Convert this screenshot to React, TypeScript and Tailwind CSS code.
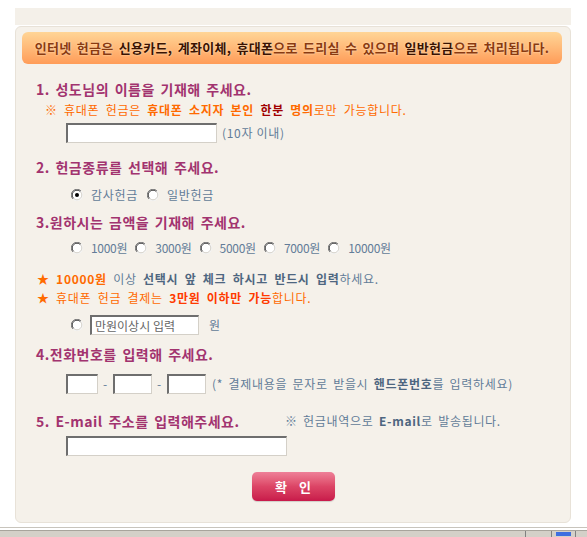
import React from "react"

function Radio({ checked = false }: { checked?: boolean }) {
  return (
    <svg width="12" height="12" viewBox="0 0 12 12" className="shrink-0">
      <circle cx="6" cy="6" r="5.5" fill="#ffffff" />
      <path d="M1.9 10.1 A5.5 5.5 0 0 1 10.1 1.9" fill="none" stroke="#808080" strokeWidth="1" />
      <path d="M2.6 9.4 A4.5 4.5 0 0 1 9.4 2.6" fill="none" stroke="#404040" strokeWidth="1" />
      <path d="M10.1 1.9 A5.5 5.5 0 0 1 1.9 10.1" fill="none" stroke="#f4f4f4" strokeWidth="1" />
      <path d="M9.4 2.6 A4.5 4.5 0 0 1 2.6 9.4" fill="none" stroke="#d4d0c8" strokeWidth="1" />
      {checked && <circle cx="6" cy="6" r="2" fill="#000000" />}
    </svg>
  )
}

const inputCls =
  "h-[20px] bg-white border-t-2 border-l-2 border-r border-b border-t-[#6e6e6e] border-l-[#6e6e6e] border-r-[#d4d0c8] border-b-[#d4d0c8] outline-none px-[3px] text-[12px] text-[#555] tracking-normal"

function Title({ children }: { children: React.ReactNode }) {
  return (
    <div className="h-[20px] flex items-center pl-[20px] text-[14px] font-bold text-[#a2336f] tracking-[0.5px] [word-spacing:2px] whitespace-nowrap">
      {children}
    </div>
  )
}

export default function App() {
  return (
    <div className="w-[587px] h-[537px] bg-white overflow-hidden flex flex-col font-['Noto_Sans_CJK_KR','Noto_Sans',sans-serif] text-[12px] text-[#627c98] tracking-[0.7px] whitespace-nowrap">
      <div className="ml-[15px] w-[556px] mt-[8px] h-[17px] bg-[#f4f0e9]" />
      {/* main panel */}
      <div className="ml-[15px] w-[556px] mt-[1px] h-[497px] rounded-[6px] border border-[#e8e2d8] bg-[#f5f1ea] flex flex-col">
        {/* banner */}
        <div className="ml-[6px] mt-[5px] w-[540px] h-[32px] rounded-[6px] bg-linear-to-b from-[#ffd596] to-[#ff9c58] flex items-center justify-center text-[13px] font-bold text-[#8a3a10] tracking-[0.3px] [text-shadow:0_0_2px_#ffeccc] [word-spacing:2px]">
          <span>
            인터넷 헌금은 <span className="text-[#3a1200]">신용카드, 계좌이체, 휴대폰</span>으로 드리실 수 있으며{" "}
            <span className="text-[#3a1200]">일반헌금</span>으로 처리됩니다.
          </span>
        </div>

        {/* 1 */}
        <div className="mt-[15px]">
          <Title>1. 성도님의 이름을 기재해 주세요.</Title>
        </div>
        <div className="mt-[2px] h-[18px] flex items-center pl-[29px] text-[#ff6a00] [word-spacing:3px]">
          <span>
            ※ 휴대폰 헌금은 <b>휴대폰 소지자 본인</b> <b className="text-[#a00000]">한분</b> <b>명의</b>로만 가능합니다.
          </span>
        </div>
        <div className="mt-[4px] pl-[50px] flex items-center gap-[5px]">
          <input type="text" className={`${inputCls} w-[151px]`} />
          <span>(10자 이내)</span>
        </div>

        {/* 2 */}
        <div className="mt-[14px]">
          <Title>2. 헌금종류를 선택해 주세요.</Title>
        </div>
        <div className="mt-[9px] h-[18px] pl-[55px] flex items-center">
          <div className="w-[76px] flex items-center gap-[8px]">
            <Radio checked />
            <span>감사헌금</span>
          </div>
          <div className="flex items-center gap-[8px]">
            <Radio />
            <span>일반헌금</span>
          </div>
        </div>

        {/* 3 */}
        <div className="mt-[8px]">
          <Title>3.원하시는 금액을 기재해 주세요.</Title>
        </div>
        <div className="mt-[7px] h-[18px] pl-[55px] flex items-center tracking-[-0.3px]">
          {["1000원", "3000원", "5000원", "7000원", "10000원"].map((v) => (
            <div key={v} className="w-[64.3px] flex items-center gap-[8px] shrink-0">
              <Radio />
              <span>{v}</span>
            </div>
          ))}
        </div>
        <div className="mt-[12px] h-[19px] pl-[21px] flex items-center [word-spacing:3px]">
          <span>
            <b className="text-[#ff6a00]">★ 10000원</b> 이상 <b className="text-[#4e6680]">선택시 앞 체크 하시고 반드시 입력</b>하세요.
          </span>
        </div>
        <div className="h-[19px] pl-[21px] flex items-center text-[#ff6a00] [word-spacing:3px]">
          <span>
            ★ 휴대폰 헌금 결제는 <b className="text-[#ff3a00]">3만원 이하만 가능</b>합니다.
          </span>
        </div>
        <div className="mt-[8px] pl-[55px] flex items-center">
          <Radio />
          <input type="text" readOnly defaultValue="만원이상시 입력" className={`${inputCls} w-[109px] ml-[7px] text-[#666]`} />
          <span className="ml-[10px]">원</span>
        </div>

        {/* 4 */}
        <div className="mt-[9px]">
          <Title>4.전화번호를 입력해 주세요.</Title>
        </div>
        <div className="mt-[10px] pl-[50px] flex items-center">
          <input type="text" className={`${inputCls} w-[32px]`} />
          <span className="w-[15px] text-center">-</span>
          <input type="text" className={`${inputCls} w-[39px]`} />
          <span className="w-[15px] text-center">-</span>
          <input type="text" className={`${inputCls} w-[39px]`} />
          <span className="ml-[6px] [word-spacing:2px]">
            (* 결제내용을 문자로 받을시 <b className="text-[#4e6680]">핸드폰번호</b>를 입력하세요)
          </span>
        </div>

        {/* 5 */}
        <div className="mt-[17px] flex items-center">
          <div className="w-[269px]">
            <Title>5. E-mail 주소를 입력해주세요.</Title>
          </div>
          <span className="[word-spacing:2px]">
            ※ 헌금내역으로 <b className="text-[#4e6680]">E-mail</b>로 발송됩니다.
          </span>
        </div>
        <div className="mt-[5px] pl-[50px]">
          <input type="text" className={`${inputCls} w-[221px]`} />
        </div>

        <div className="mt-[16px] flex justify-center">
          <button className="w-[83px] h-[29px] rounded-[5px] bg-linear-to-b from-[#ee8098] via-[#dc4466] to-[#c8184a] text-white text-[13px] font-bold tracking-normal [word-spacing:9px] shadow-[0_1px_1px_rgba(0,0,0,0.15)]">
            확 인
          </button>
        </div>
      </div>

      {/* browser status bar */}
      <div className="mt-[4px] h-[1px] bg-[#c8c4bc]" />
      <div className="h-[2px] bg-white" />
      <div className="flex-1 bg-[#d4d0c8] border-t border-[#a8a49c] flex">
        <div className="flex-1" />
        <div className="w-[26px] border-l border-[#808080]" />
        <div className="w-[24px] border-l border-[#808080] flex justify-center">
          <div className="w-[15px] h-[4px] mt-[1px] bg-[#3d6ee0]" />
        </div>
        <div className="w-[12px] border-l border-[#808080]" />
      </div>
    </div>
  )
}
